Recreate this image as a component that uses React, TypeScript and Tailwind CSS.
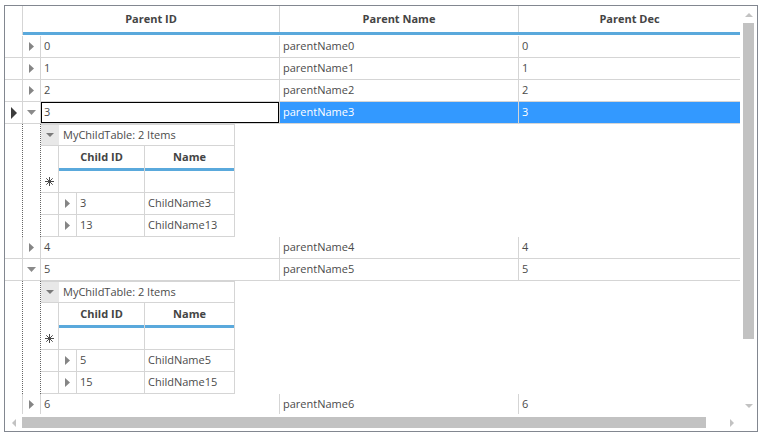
import React from "react"

type Dir = "right" | "down" | "up" | "left"

function Tri({ dir, w, h, color }: { dir: Dir; w: number; h: number; color: string }) {
  const pts =
    dir === "right"
      ? `0,0 ${w},${h / 2} 0,${h}`
      : dir === "left"
      ? `${w},0 0,${h / 2} ${w},${h}`
      : dir === "down"
      ? `0,0 ${w},0 ${w / 2},${h}`
      : `0,${h} ${w},${h} ${w / 2},0`
  return (
    <svg width={w} height={h} viewBox={`0 0 ${w} ${h}`} className="block">
      <polygon points={pts} fill={color} />
    </svg>
  )
}

function Star() {
  return (
    <svg width="9" height="9" viewBox="0 0 9 9" className="block">
      <g stroke="#4a4a4a" strokeWidth="1">
        <line x1="4.5" y1="0" x2="4.5" y2="9" />
        <line x1="0" y1="4.5" x2="9" y2="4.5" />
        <line x1="1.3" y1="1.3" x2="7.7" y2="7.7" />
        <line x1="7.7" y1="1.3" x2="1.3" y2="7.7" />
      </g>
    </svg>
  )
}

type Parent = { id: number; expanded?: boolean; selected?: boolean; children?: number[] }

const parents: Parent[] = [
  { id: 0 },
  { id: 1 },
  { id: 2 },
  { id: 3, expanded: true, selected: true, children: [3, 13] },
  { id: 4 },
  { id: 5, expanded: true, children: [5, 15] },
  { id: 6 },
]

function ParentRow({ p }: { p: Parent }) {
  const sel = p.selected
  return (
    <div className="flex h-[22px] shrink-0 border-b border-[#d5d5d5]">
      <div className="w-[18px] shrink-0 border-r border-[#d5d5d5] flex items-center justify-center">
        {sel && <Tri dir="right" w={6} h={12} color="#3c3c3c" />}
      </div>
      <div className="w-[18px] shrink-0 border-r border-[#d5d5d5] flex items-center justify-center">
        {p.expanded ? <Tri dir="down" w={9} h={5} color="#8a8a8a" /> : <Tri dir="right" w={5} h={9} color="#858585" />}
      </div>
      <div
        className={`w-[239px] shrink-0 border-r border-[#d5d5d5] flex items-center pl-[3px] ${
          sel ? "shadow-[inset_0_0_0_1px_#000]" : ""
        }`}
      >
        {p.id}
      </div>
      <div
        className={`w-[239px] shrink-0 border-r border-[#d5d5d5] flex items-center pl-[3px] ${
          sel ? "bg-[#3399ff] text-white border-[#9fcfff]" : ""
        }`}
      >
        parentName{p.id}
      </div>
      <div className={`w-[221px] shrink-0 flex items-center pl-[3px] ${sel ? "bg-[#3399ff] text-white" : ""}`}>
        {p.id}
      </div>
    </div>
  )
}

function ChildTable({ rows }: { rows: number[] }) {
  return (
    <div className="w-[194px] shrink-0 flex flex-col border-t border-r border-[#d5d5d5]">
      <div className="flex h-[21px] border-b border-[#d5d5d5]">
        <div className="w-[18px] bg-[#e8e8e8] flex items-center justify-center">
          <Tri dir="down" w={8} h={4} color="#7a7a7a" />
        </div>
        <div className="flex items-center pl-[4px]">MyChildTable: 2 Items</div>
      </div>
      <div className="flex h-[22px] font-bold text-[#444]">
        <div className="w-[18px] border-r border-[#d5d5d5]" />
        <div className="w-[86px] border-r border-[#d5d5d5] flex items-center justify-center">Child ID</div>
        <div className="w-[89px] flex items-center justify-center">Name</div>
      </div>
      <div className="flex h-[3px]">
        <div className="w-[18px] border-r border-[#d5d5d5]" />
        <div className="w-[86px] bg-[#5aa9dc] border-r border-[#d5d5d5]" />
        <div className="w-[89px] bg-[#5aa9dc]" />
      </div>
      <div className="flex h-[22px] border-b border-[#d5d5d5]">
        <div className="w-[18px] border-r border-[#d5d5d5] flex items-center justify-center">
          <Star />
        </div>
        <div className="w-[86px] border-r border-[#d5d5d5]" />
        <div className="w-[89px]" />
      </div>
      {rows.map((r) => (
        <div key={r} className="flex h-[22px] border-b border-[#d5d5d5]">
          <div className="w-[18px] border-r border-[#d5d5d5]" />
          <div className="w-[18px] border-r border-[#d5d5d5] flex items-center justify-center">
            <Tri dir="right" w={5} h={9} color="#858585" />
          </div>
          <div className="w-[68px] border-r border-[#d5d5d5] flex items-center pl-[3px]">{r}</div>
          <div className="w-[89px] flex items-center pl-[3px]">ChildName{r}</div>
        </div>
      ))}
    </div>
  )
}

function Detail({ rows }: { rows: number[] }) {
  return (
    <div className="flex h-[113px] shrink-0">
      <div className="w-[18px] shrink-0 border-r border-dotted border-[#666]" />
      <div className="w-[18px] shrink-0 border-r border-dotted border-[#666]" />
      <ChildTable rows={rows} />
    </div>
  )
}

export default function App() {
  return (
    <div className="font-['Open_Sans',sans-serif] text-[11px] text-[#4b4b4b] bg-white w-[766px] h-[439px] pt-[5px] pl-[4px]">
      <div className="w-[754px] h-[427px] border border-[#828790] flex flex-col">
        <div className="flex h-[408px]">
          <div className="w-[735px] overflow-hidden flex flex-col">
            {/* header */}
            <div className="flex h-[29px] shrink-0">
              <div className="w-[18px] border-r border-[#d5d5d5]" />
              <div className="flex flex-col">
                <div className="flex h-[26px] font-bold text-[#444]">
                  <div className="w-[257px] border-r border-[#d5d5d5] flex items-center justify-center">Parent ID</div>
                  <div className="w-[239px] border-r border-[#d5d5d5] flex items-center justify-center">Parent Name</div>
                  <div className="w-[221px] flex items-center justify-center">Parent Dec</div>
                </div>
                <div className="h-[3px] w-[717px] bg-[#5aa9dc]" />
              </div>
            </div>
            <div className="h-px shrink-0 border-l-0" />
            {parents.map((p) => (
              <React.Fragment key={p.id}>
                <ParentRow p={p} />
                {p.expanded && p.children && <Detail rows={p.children} />}
              </React.Fragment>
            ))}
          </div>
          {/* vertical scrollbar */}
          <div className="w-[17px] flex flex-col">
            <div className="h-[17px] flex items-center justify-center">
              <Tri dir="up" w={8} h={4} color="#c2c2c2" />
            </div>
            <div className="flex-1 px-[3px] pb-[58px]">
              <div className="h-[316px] bg-[#c2c2c2]" />
            </div>
            <div className="h-[17px] flex items-center justify-center">
              <Tri dir="down" w={8} h={4} color="#c2c2c2" />
            </div>
          </div>
        </div>
        {/* horizontal scrollbar */}
        <div className="flex h-[17px]">
          <div className="w-[735px] flex">
            <div className="w-[17px] flex items-center justify-center">
              <Tri dir="left" w={4} h={8} color="#c2c2c2" />
            </div>
            <div className="flex-1 py-[3px] pr-[17px]">
              <div className="h-full w-[684px] bg-[#c2c2c2]" />
            </div>
            <div className="w-[17px] flex items-center justify-center">
              <Tri dir="right" w={4} h={8} color="#c2c2c2" />
            </div>
          </div>
          <div className="w-[17px]" />
        </div>
      </div>
    </div>
  )
}
